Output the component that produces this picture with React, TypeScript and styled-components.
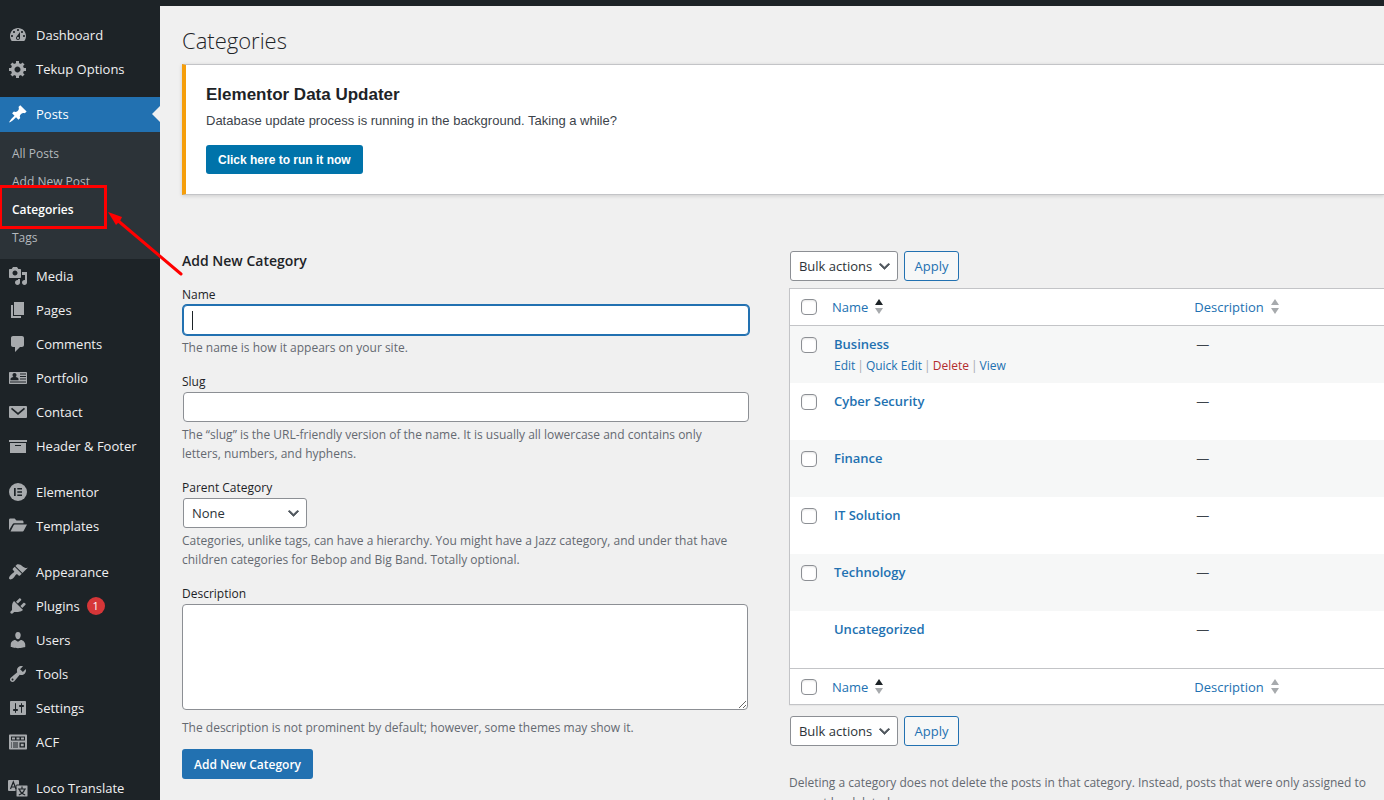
import React from "react";
import styled, { createGlobalStyle, css } from "styled-components";

const GlobalStyle = createGlobalStyle`
  *, *::before, *::after { box-sizing: border-box; }
  body {
    margin: 0;
    background: #f0f0f0;
    color: #3c434a;
    font-family: "Open Sans", "Noto Sans", sans-serif;
    font-size: 12px;
    line-height: 20px;
  }
  h1, h2, p, ul { margin: 0; padding: 0; }
  ul { list-style: none; }
  a { color: #2271b1; text-decoration: none; }
  button, input, select, textarea { font: inherit; }
`;

/* ---------- shell ---------- */

const Shell = styled.div`
  position: relative;
  display: flex;
  height: 100vh;
  overflow: hidden;
`;

const Sidebar = styled.nav`
  flex: 0 0 160px;
  padding-top: 18px;
  background: #1d2327;
`;

const Page = styled.div`
  flex: 1;
  min-width: 0;
`;

const AdminBar = styled.header`
  height: 6px;
  background: #1d2327;
`;

const Content = styled.main`
  padding: 20px 0 0 22px;
`;

/* ---------- sidebar menu ---------- */

const MenuGroup = styled.ul<{ $current?: boolean }>`
  &:not(:first-child) {
    margin-top: ${(p) => (p.$current ? 11 : 12)}px;
  }
`;

const MenuLink = styled.a<{ $current?: boolean }>`
  position: relative;
  display: flex;
  align-items: center;
  gap: 8px;
  height: ${(p) => (p.$current ? 35 : 34)}px;
  padding: 0 0 ${(p) => (p.$current ? 1 : 0)}px 8px;
  color: ${(p) => (p.$current ? "#fff" : "#f0f0f1")};
  background: ${(p) => (p.$current ? "#2271b1" : "transparent")};
  font-size: 13px;
  white-space: nowrap;

  svg {
    width: 20px;
    height: 20px;
    flex: none;
    color: ${(p) => (p.$current ? "#fff" : "#a7aaad")};
  }

  ${(p) =>
    p.$current &&
    css`
      &::after {
        content: "";
        position: absolute;
        right: 0;
        top: 9px;
        border: 8px solid transparent;
        border-right-color: #f0f0f0;
        border-left: 0;
      }
    `}
`;

const Badge = styled.span`
  min-width: 18px;
  height: 18px;
  margin-left: -1px;
  border-radius: 9px;
  background: #d63638;
  color: #fff;
  font-size: 11px;
  line-height: 18px;
  text-align: center;
`;

const SubMenu = styled.ul`
  padding: 8px 0 7px;
  background: #2c3338;
`;

const SubLink = styled.a<{ $current?: boolean }>`
  display: block;
  height: 28px;
  padding-left: 12px;
  color: ${(p) => (p.$current ? "#fff" : "#b4b9be")};
  font-weight: ${(p) => (p.$current ? 600 : 400)};
  line-height: 28px;
`;

/* ---------- heading and notice ---------- */

const PageTitle = styled.h1`
  margin-bottom: 10px;
  color: #1d2327;
  font-size: 22px;
  font-weight: 300;
  line-height: 28px;
`;

const Notice = styled.section`
  margin-bottom: 56px;
  padding: 20px;
  border: 1px solid #c3c4c7;
  border-left: 4px solid #f59e0b;
  border-right: 0;
  background: #fff;
  box-shadow: 0 1px 4px rgba(0, 0, 0, 0.15);
  font-family: "Liberation Sans", Arial, sans-serif;
`;

const NoticeTitle = styled.h2`
  margin-bottom: 6px;
  color: #1d2327;
  font-size: 17px;
  font-weight: 600;
  line-height: 20px;
`;

const NoticeText = styled.p`
  margin-bottom: 14px;
  font-size: 13px;
`;

const NoticeButton = styled.button`
  display: block;
  height: 29px;
  padding: 0 12px;
  border: 0;
  border-radius: 3px;
  background: #0073aa;
  color: #fff;
  font-size: 12px;
  font-weight: 600;
`;

/* ---------- form ---------- */

const Columns = styled.div`
  display: grid;
  grid-template-columns: minmax(0, 21fr) minmax(0, 22fr);
  column-gap: 39px;
`;

const FormTitle = styled.h2`
  margin-bottom: 13px;
  color: #1d2327;
  font-size: 14px;
  font-weight: 600;
  line-height: 20px;
`;

const Field = styled.div`
  margin-bottom: 14px;

  &:last-of-type {
    margin-bottom: 12px;
  }
`;

const Label = styled.label`
  display: block;
  height: 20px;
  color: #1d2327;
  line-height: 22px;
`;

const Help = styled.p<{ $gap?: number }>`
  margin-top: ${(p) => p.$gap ?? 2}px;
  padding-right: 10px;
  color: #646970;
  line-height: 19px;
`;

const controlLook = css`
  border: 1px solid #8c8f94;
  border-radius: 4px;
  background: #fff;
  color: #2c3338;
  outline: none;
`;

const InputBox = styled.div<{ $active?: boolean }>`
  position: relative;
  padding: 1px;

  ${(p) =>
    p.$active &&
    css`
      &::after {
        content: "";
        position: absolute;
        left: 10px;
        top: 7px;
        width: 1px;
        height: 19px;
        background: #1d2327;
      }
    `}
`;

const TextInput = styled.input<{ $active?: boolean }>`
  ${controlLook}
  display: block;
  width: 100%;
  height: 30px;
  padding: 0 8px;
  ${(p) =>
    p.$active &&
    css`
      border-color: #2271b1;
      box-shadow: 0 0 0 1px #2271b1;
    `}
`;

const TextArea = styled.textarea`
  ${controlLook}
  display: block;
  width: calc(100% - 2px);
  height: 106px;
  margin-top: 1px;
  padding: 2px 6px;
  resize: vertical;
`;

const SelectBox = styled.div<{ $width: number }>`
  position: relative;
  width: ${(p) => p.$width}px;
  margin: 1px;

  svg {
    position: absolute;
    right: 6px;
    top: 8px;
    width: 15px;
    height: 15px;
    pointer-events: none;
  }
`;

const Select = styled.select`
  ${controlLook}
  appearance: none;
  display: block;
  width: 100%;
  height: 30px;
  padding: 0 24px 0 8px;
  border-radius: 3px;
  font-size: 13px;
`;

const PrimaryButton = styled.button`
  height: 30px;
  padding: 1px 12px 0;
  border: 0;
  border-radius: 3px;
  background: #2271b1;
  color: #fff;
  font-weight: 600;
`;

const OutlineButton = styled.button`
  width: 55px;
  height: 30px;
  padding: 0;
  border: 1px solid #2271b1;
  border-radius: 3px;
  background: #f6f7f7;
  color: #2271b1;
  font-size: 13px;
`;

/* ---------- category table ---------- */

const Toolbar = styled.div`
  display: flex;
  align-items: center;
  gap: 5px;
  height: 30px;
`;

const Table = styled.table`
  width: 100%;
  margin: 7px 0 11px;
  border: 1px solid #c3c4c7;
  border-right: 0;
  border-spacing: 0;
  background: #fff;
  box-shadow: 0 1px 1px rgba(0, 0, 0, 0.04);
  table-layout: fixed;
`;

const HeadCell = styled.th<{ $width?: string; $foot?: boolean }>`
  width: ${(p) => p.$width ?? "auto"};
  height: ${(p) => (p.$foot ? 36 : 37)}px;
  padding: 0 8px;
  border-${(p) => (p.$foot ? "top" : "bottom")}: 1px solid #c3c4c7;
  font-size: 13px;
  font-weight: 400;
  text-align: left;
`;

const CheckHeadCell = styled(HeadCell)`
  padding: 0 0 0 11px;
`;

const SortLink = styled.a`
  display: flex;
  align-items: center;
  gap: 7px;
`;

const SortIcon = styled.svg`
  width: 8px;
  height: 16px;
`;

const Row = styled.tr`
  height: 57px;
  vertical-align: top;

  &:nth-child(odd) {
    background: #f6f7f7;
  }
`;

const Cell = styled.td`
  padding: 8px 10px 0;
  font-size: 13px;
`;

const CheckCell = styled.td`
  padding: 11px 0 0 11px;
`;

const Checkbox = styled.input`
  appearance: none;
  display: block;
  width: 16px;
  height: 16px;
  margin: 0;
  border: 1px solid #8c8f94;
  border-radius: 4px;
  background: #fff;
  box-shadow: inset 0 1px 2px rgba(0, 0, 0, 0.1);
`;

const CategoryLink = styled.a`
  font-weight: 600;
`;

const RowActions = styled.div`
  display: flex;
  gap: 2px;
  margin-top: 2px;
  color: #a7aaad;
  font-size: 12px;
  line-height: 20px;
`;

const DeleteLink = styled.a`
  color: #b32d2e;
`;

const Footnote = styled.p`
  margin-top: 27px;
  color: #646970;
  white-space: nowrap;
`;

/* ---------- annotation ---------- */

const Highlight = styled.div`
  position: absolute;
  left: -1px;
  top: 185px;
  width: 108px;
  height: 44px;
  border: 3px solid #f00;
`;

const Arrow = styled.svg`
  position: absolute;
  left: 104px;
  top: 206px;
  width: 82px;
  height: 72px;
`;

/* ---------- icons ---------- */

const Icon = ({ d, children }: { d?: string; children?: React.ReactNode }) => (
  <svg viewBox="0 0 20 20" fill="currentColor" aria-hidden="true">
    {d && <path fillRule="evenodd" d={d} />}
    {children}
  </svg>
);

const icons = {
  dashboard: (
    <Icon d="M3.76 16h12.48c1.1-1.37 1.76-3.11 1.76-5 0-4.42-3.58-8-8-8s-8 3.58-8 8c0 1.89.66 3.63 1.76 5zM10 4c.55 0 1 .45 1 1s-.45 1-1 1-1-.45-1-1 .45-1 1-1zM6 6c.55 0 1 .45 1 1s-.45 1-1 1-1-.45-1-1 .45-1 1-1zm8 0c.55 0 1 .45 1 1s-.45 1-1 1-1-.45-1-1 .45-1 1-1zm-5.37 5.55L12 7v6c0 1.1-.9 2-2 2s-2-.9-2-2c0-.57.24-1.08.63-1.45zM4 10c.55 0 1 .45 1 1s-.45 1-1 1-1-.45-1-1 .45-1 1-1zm12 0c.55 0 1 .45 1 1s-.45 1-1 1-1-.45-1-1 .45-1 1-1zm-5 3c0-.55-.45-1-1-1s-1 .45-1 1 .45 1 1 1 1-.45 1-1z" />
  ),
  gear: (
    <Icon d="M18 12h-2.18c-.17.7-.44 1.35-.81 1.93l1.54 1.54-2.1 2.1-1.54-1.54c-.58.36-1.23.63-1.91.79V19H8v-2.18c-.68-.16-1.33-.43-1.91-.79l-1.54 1.54-2.12-2.12 1.54-1.54c-.36-.58-.63-1.23-.79-1.91H1V9.03h2.17c.16-.7.44-1.35.8-1.94L2.43 5.55l2.1-2.1 1.54 1.54c.58-.37 1.24-.64 1.93-.81V2h3v2.18c.68.16 1.33.43 1.91.79l1.54-1.54 2.12 2.12-1.54 1.54c.36.59.64 1.24.8 1.94H18V12zm-8.5 1.5c1.66 0 3-1.34 3-3s-1.34-3-3-3-3 1.34-3 3 1.34 3 3 3z" />
  ),
  pin: (
    <Icon d="M10.44 3.02l1.82-1.82 6.36 6.35-1.83 1.82c-1.05-.68-2.48-.57-3.41.36l-.75.75c-.92.93-1.04 2.35-.35 3.41l-1.83 1.82-2.41-2.41-2.8 2.79c-.42.42-3.38 2.71-3.8 2.29s1.86-3.39 2.28-3.81l2.79-2.79L4.1 9.36l1.83-1.82c1.05.69 2.48.57 3.4-.36l.75-.75c.93-.92 1.05-2.35.36-3.41z" />
  ),
  media: (
    <Icon d="M13 11V4c0-.55-.45-1-1-1h-1.67L9 1H5L3.67 3H2c-.55 0-1 .45-1 1v7c0 .55.45 1 1 1h10c.55 0 1-.45 1-1zM7 4.5c1.38 0 2.5 1.12 2.5 2.5S8.38 9.5 7 9.5 4.5 8.38 4.5 7 5.62 4.5 7 4.5zM14 6h5v10.5c0 1.38-1.12 2.5-2.5 2.5S14 17.88 14 16.5s1.12-2.5 2.5-2.5c.17 0 .34.02.5.05V9h-3V6zm-4 8.05V13h2v3.5c0 1.38-1.12 2.5-2.5 2.5S7 17.88 7 16.5 8.12 14 9.5 14c.17 0 .34.02.5.05z" />
  ),
  pages: <Icon d="M6 15V2h10v13H6zm-1 1h8v2H3V5h2v11z" />,
  comments: (
    <Icon d="M5 2h9c1.1 0 2 .9 2 2v7c0 1.1-.9 2-2 2h-2l-5 5v-5H5c-1.1 0-2-.9-2-2V4c0-1.1.9-2 2-2z" />
  ),
  portfolio: (
    <Icon d="M2 4h16c.55 0 1 .45 1 1v10c0 .55-.45 1-1 1H2c-.55 0-1-.45-1-1V5c0-.55.45-1 1-1zM2 13.5v1h16v-1zM12 5.500v1h6v-1zM12 8v1h6V8zM12 10.500v1h6v-1zM6.500 5c-1.200 0-2 .9-2 2.100 0 .8.4 1.600 1 2C3.700 9.300 2.500 10 2.500 11v1.200h8V11c0-1-1.200-1.700-3-1.900.6-.4 1-1.200 1-2C8.500 5.900 7.700 5 6.500 5z" />
  ),
  mail: (
    <Icon>
      <rect x="1" y="4" width="18" height="12" rx="1" />
      <path d="M3.500 6.300L10 11.800l6.500-5.500" fill="none" stroke="#1d2327" strokeWidth="1.700" />
    </Icon>
  ),
  archive: <Icon d="M19 4v2H1V4h18zM2 7h16v10H2V7zm11 3V9H7v1h6z" />,
  elementor: (
    <Icon>
      <circle cx="10" cy="10" r="9" />
      <path d="M6 6h1.700v8H6zM9.300 6H14v1.600H9.300zM9.300 9.200H14v1.600H9.300zM9.300 12.400H14V14H9.300z" fill="#1d2327" />
    </Icon>
  ),
  folder: (
    <Icon d="M1 4c0-.8.600-1.400 1.400-1.400h4.200L8.500 4.500h5.600c.8 0 1.400.600 1.400 1.400v1.300H6.200c-.7 0-1.300.400-1.600 1L1 14.200zM6.700 8.400H19l-3.300 6.300c-.2.400-.6.700-1.100.7H2.500l3.300-6.400c.2-.4.500-.6.900-.6z" />
  ),
  brush: (
    <Icon d="M14.48 11.06L7.41 3.99l1.5-1.5c.5-.56 2.3-.47 3.51.32 1.21.8 1.43 1.28 2.91 2.1 1.18.64 2.45 1.26 4.45.85zm-.71.71L6.7 4.7 4.93 6.47c-.39.39-.39 1.02 0 1.41l1.06 1.06c.39.39.39 1.03 0 1.42-.6.6-1.43 1.11-2.21 1.69-.35.26-.7.53-1.01.84C1.43 14.23.4 16.08 1.4 17.07c.99 1 2.84-.03 4.18-1.36.31-.31.58-.66.85-1.02.57-.78 1.08-1.61 1.69-2.21.39-.39 1.02-.39 1.41 0l1.06 1.06c.39.39 1.02.39 1.41 0z" />
  ),
  plug: (
    <Icon d="M13.11 4.36L9.87 7.6 8 5.73l3.24-3.24c.35-.34 1.05-.2 1.56.32.52.51.66 1.21.31 1.55zm-8 1.77l.91-1.12 9.01 9.01-1.19.84c-.71.71-2.63 1.16-3.82 1.16H6.14L4.9 17.26c-.59.59-1.54.59-2.12 0-.59-.58-.59-1.53 0-2.12l1.24-1.24v-3.88c0-1.13.4-3.19 1.09-3.89zm7.26 3.97l3.24-3.24c.34-.35 1.04-.21 1.55.31.52.51.66 1.21.31 1.55l-3.24 3.25z" />
  ),
  user: (
    <Icon d="M10 9.25c-2.27 0-2.73-3.44-2.73-3.44C7 4.02 7.82 2 9.97 2c2.16 0 2.98 2.02 2.71 3.81 0 0-.41 3.44-2.68 3.44zm0 2.57L12.72 10c2.39 0 4.52 2.33 4.52 4.53v2.49s-3.65 1.13-7.24 1.13c-3.65 0-7.24-1.13-7.24-1.13v-2.49c0-2.25 1.94-4.48 4.47-4.48z" />
  ),
  wrench: (
    <Icon d="M16.68 9.77c-1.34 1.34-3.3 1.67-4.95.99l-5.41 6.52c-.99.99-2.59.99-3.58 0s-.99-2.59 0-3.57l6.52-5.42c-.68-1.65-.35-3.61.99-4.95 1.28-1.28 3.12-1.62 4.72-1.06l-2.89 2.89 2.82 2.82 2.86-2.87c.53 1.58.18 3.39-1.08 4.65zM3.81 16.21c.4.39 1.04.39 1.43 0 .4-.4.4-1.04 0-1.43-.39-.4-1.03-.4-1.43 0-.39.39-.39 1.03 0 1.43z" />
  ),
  sliders: (
    <Icon d="M18 16V4c0-.55-.45-1-1-1H3c-.55 0-1 .45-1 1v12c0 .55.45 1 1 1h14c.55 0 1-.45 1-1zM8 11h1c.55 0 1 .45 1 1s-.45 1-1 1H8v1.5c0 .28-.22.5-.5.5s-.5-.22-.5-.5V13H6c-.55 0-1-.45-1-1s.45-1 1-1h1V5.5c0-.28.22-.5.5-.5s.5.22.5.5V11zm5-2h-1c-.55 0-1-.45-1-1s.45-1 1-1h1V5.5c0-.28.22-.5.5-.5s.5.22.5.5V7h1c.55 0 1 .45 1 1s-.45 1-1 1h-1v5.5c0 .28-.22.5-.5.5s-.5-.22-.5-.5V9z" />
  ),
  fields: (
    <Icon d="M2 2.500h16c.55 0 1 .45 1 1v13c0 .55-.45 1-1 1H2c-.55 0-1-.45-1-1v-13c0-.55.45-1 1-1zM3 4.500v4h14v-4zM4 5.500h3v2H4zM8.500 5.500h3v2h-3zM13 5.500h3v2h-3zM3 10.500v1h1v-1zM5 10.500v1h5v-1zM3 12.500v1h1v-1zM5 12.500v1h5v-1zM3 14.500v1h1v-1zM5 14.500v1h5v-1zM11.500 10.500v5H17v-5zM12.800 11.800h2.900v2.400h-2.900z" />
  ),
  translate: (
    <svg viewBox="0 0 20 20" fill="currentColor" aria-hidden="true">
      <rect x="0" y="2" width="11" height="11" rx="1" />
      <rect x="8" y="7" width="12" height="12" rx="1" stroke="#1d2327" />
      <path d="M2.500 11L5.300 4 8 11M3.500 9h3.700M14 8.500v2M10 11h8M11.500 11.500c.7 2.500 3 4.500 5.700 5.500M16.500 11.500c-.7 2.500-3 4.500-5.700 5.500" fill="none" stroke="#1d2327" strokeWidth="1.200" />
    </svg>
  ),
};

const Chevron = () => (
  <svg viewBox="0 0 20 20" aria-hidden="true">
    <path
      fill="#50575e"
      d="M5 6l5 5 5-5 2 1-7 7-7-7 2-1z"
      stroke="#50575e"
    />
  </svg>
);

/* ---------- parts ---------- */

type Item = { label: string; icon: keyof typeof icons; badge?: string };

const menu: Item[][] = [
  [
    { label: "Dashboard", icon: "dashboard" },
    { label: "Tekup Options", icon: "gear" },
  ],
  [
    { label: "Posts", icon: "pin" },
    { label: "Media", icon: "media" },
    { label: "Pages", icon: "pages" },
    { label: "Comments", icon: "comments" },
    { label: "Portfolio", icon: "portfolio" },
    { label: "Contact", icon: "mail" },
    { label: "Header & Footer", icon: "archive" },
  ],
  [
    { label: "Elementor", icon: "elementor" },
    { label: "Templates", icon: "folder" },
  ],
  [
    { label: "Appearance", icon: "brush" },
    { label: "Plugins", icon: "plug", badge: "1" },
    { label: "Users", icon: "user" },
    { label: "Tools", icon: "wrench" },
    { label: "Settings", icon: "sliders" },
    { label: "ACF", icon: "fields" },
  ],
  [{ label: "Loco Translate", icon: "translate" }],
];

const postsLinks = ["All Posts", "Add New Post", "Categories", "Tags"];

const categories = [
  "Business",
  "Cyber Security",
  "Finance",
  "IT Solution",
  "Technology",
  "Uncategorized",
];

const SortMarks = ({ sorted }: { sorted?: boolean }) => (
  <SortIcon viewBox="0 0 8 16" aria-hidden="true">
    <path d="M0 6l4-6 4 6z" fill={sorted ? "#1d2327" : "#a7aaad"} />
    <path d="M0 9l4 6 4-6z" fill="#a7aaad" />
  </SortIcon>
);

const TableHeading = ({ foot }: { foot?: boolean }) => (
  <tr>
    <CheckHeadCell $foot={foot} $width="34px">
      <Checkbox type="checkbox" aria-label="Select all" />
    </CheckHeadCell>
    <HeadCell $foot={foot} $width="61%">
      <SortLink href="#name">
        Name
        <SortMarks sorted />
      </SortLink>
    </HeadCell>
    <HeadCell $foot={foot}>
      <SortLink href="#description">
        Description
        <SortMarks />
      </SortLink>
    </HeadCell>
  </tr>
);

const BulkActions = () => (
  <Toolbar>
    <SelectBox $width={108}>
      <Select aria-label="Select bulk action">
        <option>Bulk actions</option>
      </Select>
      <Chevron />
    </SelectBox>
    <OutlineButton type="button">Apply</OutlineButton>
  </Toolbar>
);

export default function App() {
  return (
    <Shell>
      <GlobalStyle />
      <Sidebar aria-label="Main menu">
        {menu.map((group, i) => (
          <MenuGroup key={i} $current={group[0].label === "Posts"}>
            {group.map((item) => (
              <li key={item.label}>
                <MenuLink href="#menu" $current={item.label === "Posts"}>
                  {icons[item.icon]}
                  {item.label}
                  {item.badge && <Badge>{item.badge}</Badge>}
                </MenuLink>
                {item.label === "Posts" && (
                  <SubMenu>
                    {postsLinks.map((name) => (
                      <li key={name}>
                        <SubLink href="#posts" $current={name === "Categories"}>
                          {name}
                        </SubLink>
                      </li>
                    ))}
                  </SubMenu>
                )}
              </li>
            ))}
          </MenuGroup>
        ))}
      </Sidebar>

      <Page>
        <AdminBar />
        <Content>
          <PageTitle>Categories</PageTitle>
          <Notice>
            <NoticeTitle>Elementor Data Updater</NoticeTitle>
            <NoticeText>
              Database update process is running in the background. Taking a while?
            </NoticeText>
            <NoticeButton type="button">Click here to run it now</NoticeButton>
          </Notice>

          <Columns>
            <form>
              <FormTitle>Add New Category</FormTitle>
              <Field>
                <Label htmlFor="name">Name</Label>
                <InputBox $active>
                  <TextInput id="name" type="text" $active />
                </InputBox>
                <Help>The name is how it appears on your site.</Help>
              </Field>
              <Field>
                <Label htmlFor="slug">Slug</Label>
                <InputBox>
                  <TextInput id="slug" type="text" />
                </InputBox>
                <Help>
                  The “slug” is the URL-friendly version of the name. It is usually all
                  lowercase and contains only letters, numbers, and hyphens.
                </Help>
              </Field>
              <Field>
                <Label htmlFor="parent">Parent Category</Label>
                <SelectBox $width={124}>
                  <Select id="parent">
                    <option>None</option>
                  </Select>
                  <Chevron />
                </SelectBox>
                <Help $gap={3}>
                  Categories, unlike tags, can have a hierarchy. You might have a Jazz
                  category, and under that have children categories for Bebop and Big
                  Band. Totally optional.
                </Help>
              </Field>
              <Field>
                <Label htmlFor="description">Description</Label>
                <TextArea id="description" />
                <Help $gap={8}>
                  The description is not prominent by default; however, some themes may
                  show it.
                </Help>
              </Field>
              <PrimaryButton type="button">Add New Category</PrimaryButton>
            </form>

            <section>
              <BulkActions />
              <Table>
                <thead>
                  <TableHeading />
                </thead>
                <tbody>
                  {categories.map((name) => (
                    <Row key={name}>
                      <CheckCell>
                        {name !== "Uncategorized" && (
                          <Checkbox type="checkbox" aria-label={`Select ${name}`} />
                        )}
                      </CheckCell>
                      <Cell>
                        <CategoryLink href="#category">{name}</CategoryLink>
                        {name === "Business" && (
                          <RowActions>
                            <a href="#edit">Edit</a>
                            <span>|</span>
                            <a href="#quick-edit">Quick Edit</a>
                            <span>|</span>
                            <DeleteLink href="#delete">Delete</DeleteLink>
                            <span>|</span>
                            <a href="#view">View</a>
                          </RowActions>
                        )}
                      </Cell>
                      <Cell>—</Cell>
                    </Row>
                  ))}
                </tbody>
                <tfoot>
                  <TableHeading foot />
                </tfoot>
              </Table>
              <BulkActions />
              <Footnote>
                Deleting a category does not delete the posts in that category. Instead,
                posts that were only assigned to
                <br />
                cannot be deleted.
              </Footnote>
            </section>
          </Columns>
        </Content>
      </Page>

      <Highlight />
      <Arrow viewBox="0 0 82 72" aria-hidden="true">
        <path d="M12 13L77 68" stroke="#f00" strokeWidth="3" strokeLinecap="round" />
        <path d="M4 6l14 5-2 4-4 4z" fill="#f00" />
      </Arrow>
    </Shell>
  );
}
